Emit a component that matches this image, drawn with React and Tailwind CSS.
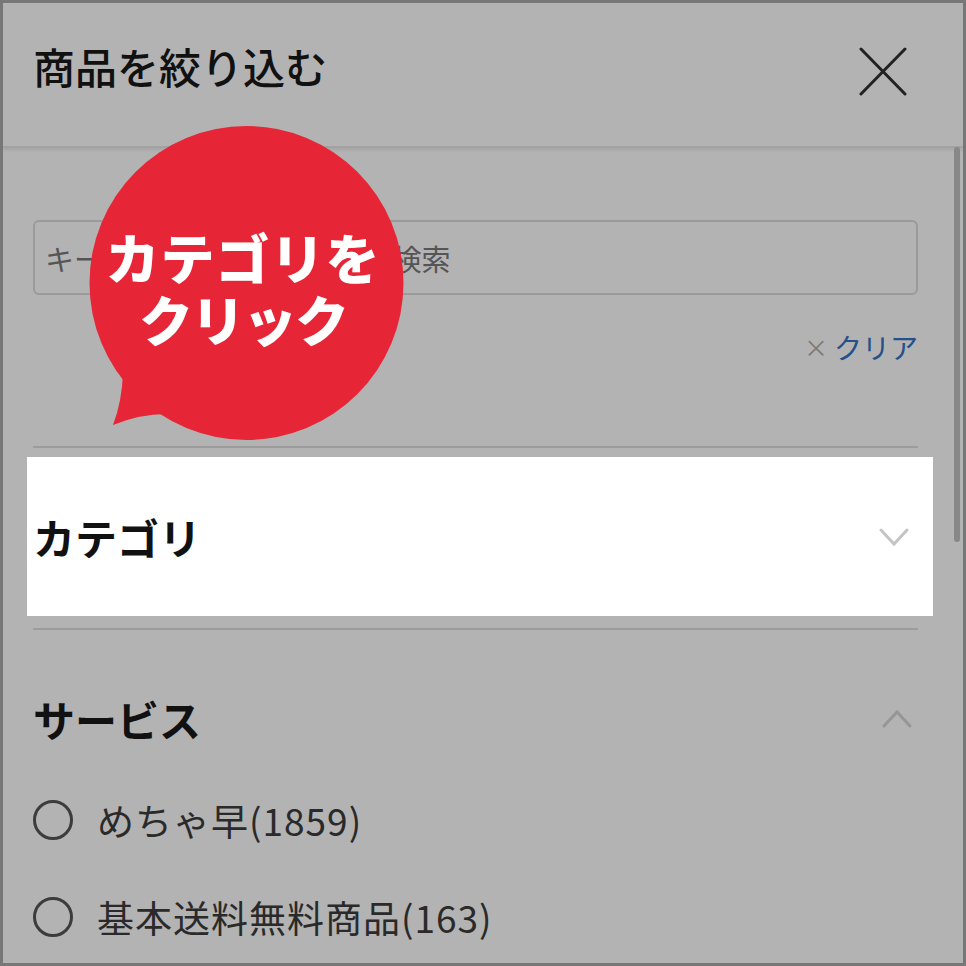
import { useState } from 'react'

const FONT = { fontFamily: '"Noto Sans CJK JP", "Noto Sans", sans-serif' }

function Bubble() {
    return (
        <div className="absolute left-[77px] top-[117px] w-[326px] h-[323px]">
            <svg className="absolute inset-0" width="326" height="323" viewBox="0 0 326 323">
                <circle cx="166.5" cy="163" r="157" fill="#e62636" />
                <path d="M43 252 Q42 282 33 305 Q60 294 86 294 Z" fill="#e62636" />
            </svg>
            <div className="absolute inset-0 flex flex-col items-center pt-[106px] text-white font-black text-[54px] leading-[62px]">
                <span className="tracking-[1px]">カテゴリを</span>
                <span className="-tracking-[2px]">クリック</span>
            </div>
        </div>
    )
}

function Radio({ label }) {
    return (
        <label className="flex items-center h-10 gap-6">
            <span className="w-10 h-10 rounded-full border-[3px] border-[#3c3c3c]" />
            <span className="text-[37px] leading-none tracking-[1px] text-[#2a2a2a]">{label}</span>
        </label>
    )
}

export default function App() {
    const [q, setQ] = useState('')

    return (
        <div className="relative w-[966px] h-[966px] overflow-hidden border-[3px] border-[#777] bg-[#b3b3b3]" style={FONT}>
            <header className="flex items-start justify-between h-[145px] pt-[42px] pl-[30px] pr-[55px] border-b-2 border-[#a2a2a2] shadow-[0_2px_3px_rgba(0,0,0,0.08)]">
                <h1 className="text-[42px] leading-none font-medium text-[#111]">商品を絞り込む</h1>
                <svg width="50" height="50" viewBox="0 0 50 50" className="mt-[1px]">
                    <path d="M3 3 L47 48 M47 3 L3 48" stroke="#222" strokeWidth="3" strokeLinecap="round" />
                </svg>
            </header>

            <div className="px-[30px] pr-[45px]">
                <input
                    value={q}
                    onChange={e => setQ(e.target.value)}
                    placeholder="キーワード・商品名などで検索"
                    className="mt-[72px] w-full h-[75px] rounded-md border-2 border-[#9a9a9a] bg-transparent pl-[10px] text-[29px] outline-none placeholder:text-[#555]"
                />

                <div className="mt-[38px] flex justify-end items-center h-[28px] text-[28px] leading-none">
                    <span className="text-[#7a7a7a] text-[24px] mr-[6px]">×</span>
                    <span className="text-[#24508c]">クリア</span>
                </div>

                <div className="mt-[85px] h-[2px] bg-[#9c9c9c]" />

                <div className="mt-[9px] -ml-[6px] -mr-[15px] h-[159px] bg-white flex items-center justify-between pl-[6px] pr-[23px]">
                    <span className="text-[42px] leading-none font-bold text-[#111]">カテゴリ</span>
                    <svg width="32" height="22" viewBox="0 0 32 22">
                        <path d="M3 4 L16 18 L29 4" fill="none" stroke="#c4c4c4" strokeWidth="3" strokeLinecap="round" />
                    </svg>
                </div>

                <div className="mt-[12px] h-[2px] bg-[#9c9c9c]" />

                <div className="mt-[68px] flex items-center justify-between pr-[5px]">
                    <span className="text-[42px] leading-none font-bold text-[#111]">サービス</span>
                    <svg width="32" height="22" viewBox="0 0 32 22">
                        <path d="M3 18 L16 4 L29 18" fill="none" stroke="#969696" strokeWidth="3" strokeLinecap="round" />
                    </svg>
                </div>

                <div className="mt-[60px] flex flex-col gap-[57px]">
                    <Radio label="めちゃ早(1859)" />
                    <Radio label="基本送料無料商品(163)" />
                </div>
            </div>

            <div className="absolute left-[951px] top-[144px] w-[6px] h-[395px] rounded-sm bg-[#888]" />

            <Bubble />
        </div>
    )
}
